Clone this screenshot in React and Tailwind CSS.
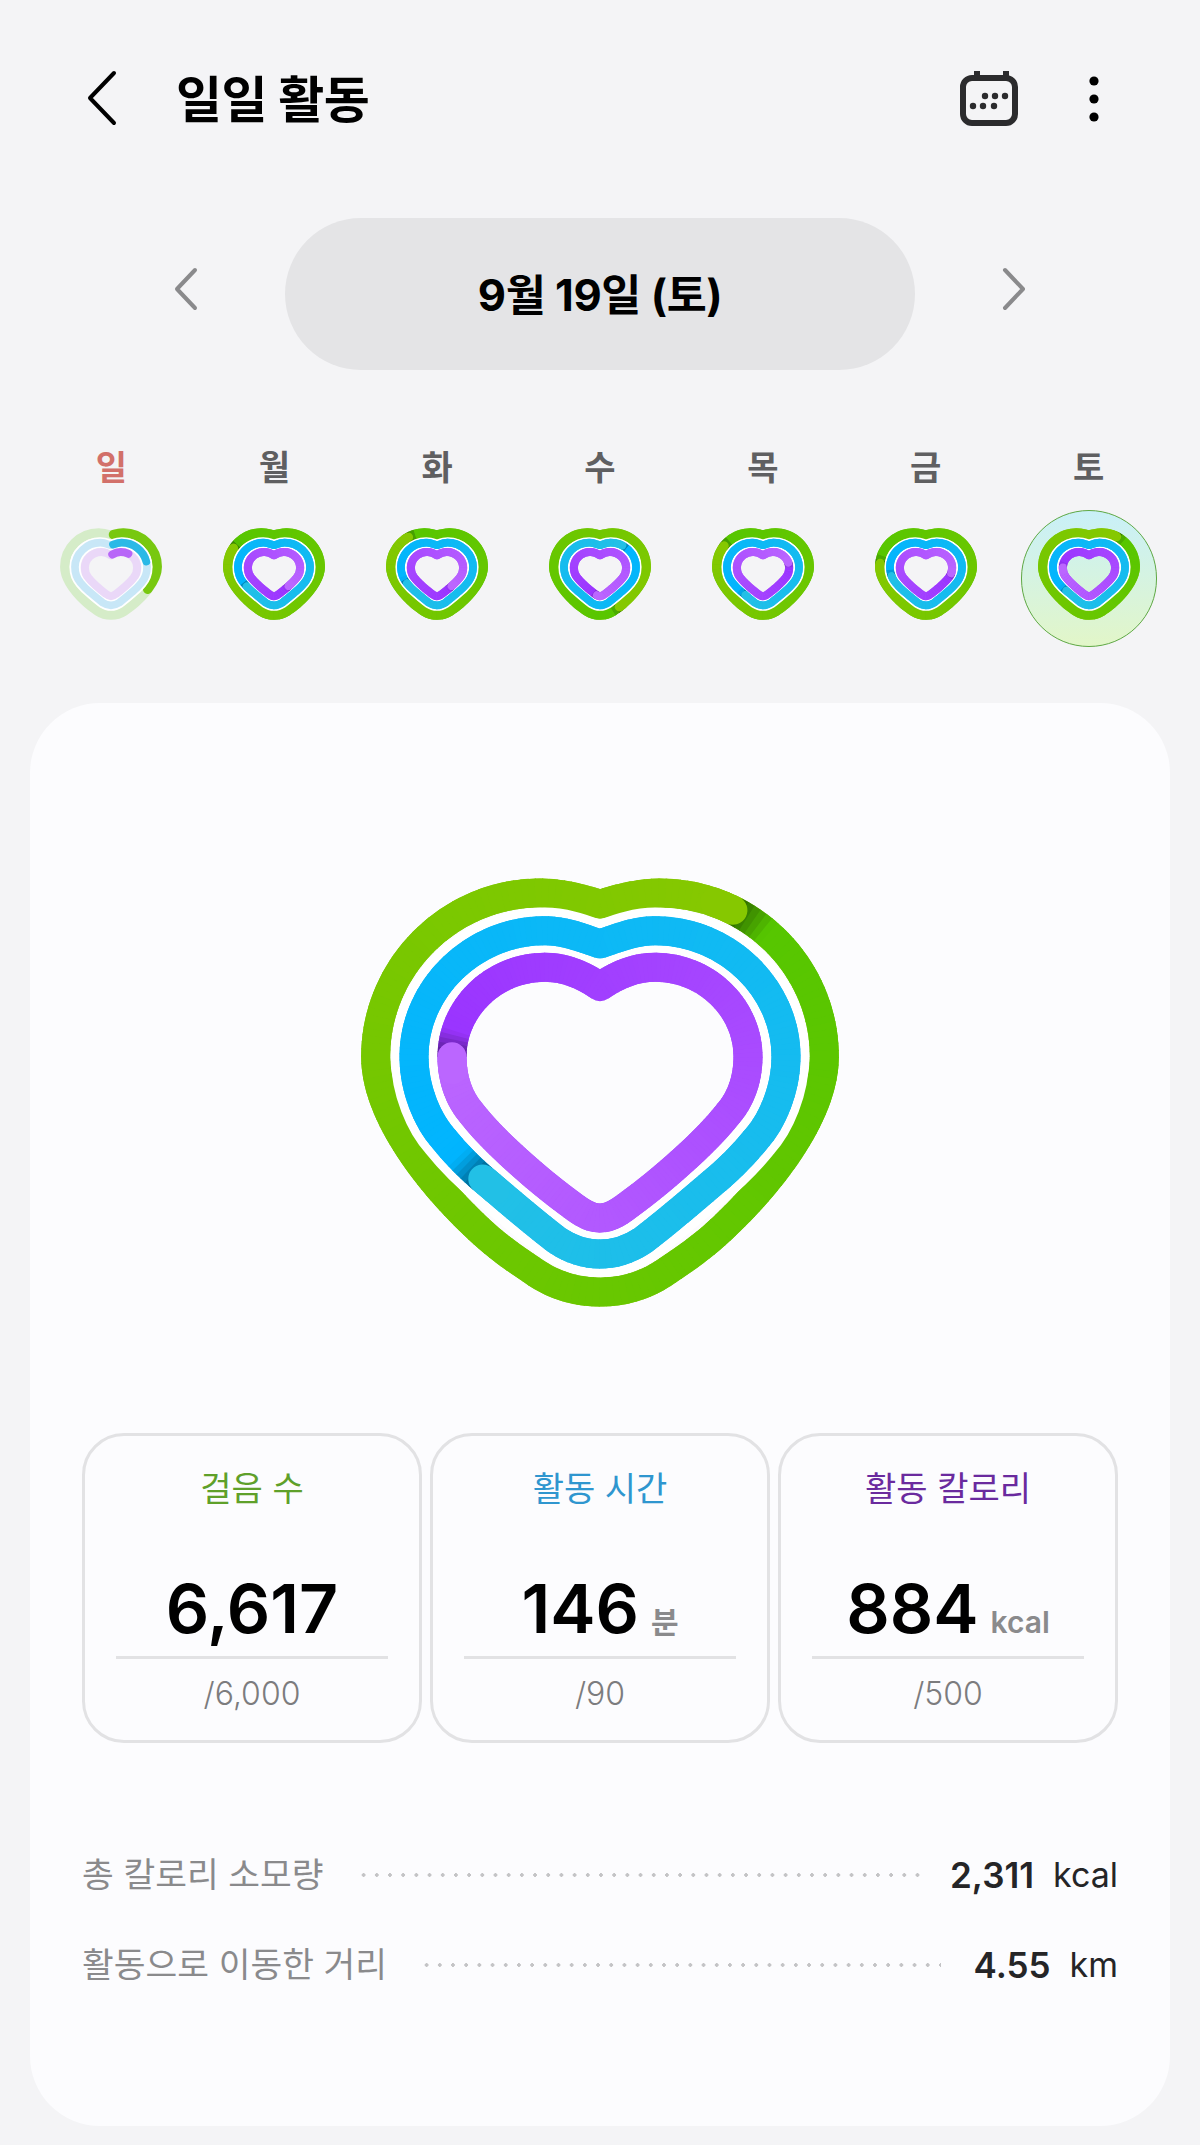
import React from "react";

const HALF = {
  green: [[780,133],[835,115,895,99,960,99],[1230,99,1453,320,1453,590],[1453,760,1300,960,1152,1100],[1090,1160,1030,1200,970,1240],[925,1270,860,1296,780,1296]],
  blue: [[780,252],[830,235,885,212,945,212],[1160,212,1338,385,1338,590],[1338,690,1295,785,1250,835],[1210,885,1165,930,1110,975],[1040,1035,975,1090,910,1140],[865,1170,825,1182,780,1182]],
  purple: [[780,380],[830,345,885,322,945,322],[1100,322,1224,445,1224,590],[1224,660,1200,720,1165,760],[1130,805,1080,855,1030,900],[975,950,920,995,865,1035],[835,1058,810,1074,780,1074]],
};

function heartPath(h) {
  const m = (x) => 1560 - x;
  let d = `M${h[0][0]} ${h[0][1]}`;
  for (let i = 1; i < h.length; i++) {
    const s = h[i];
    d += ` C${s[0]} ${s[1]} ${s[2]} ${s[3]} ${s[4]} ${s[5]}`;
  }
  for (let i = h.length - 1; i >= 1; i--) {
    const s = h[i];
    const prev = i === 1 ? h[0] : h[i - 1].slice(-2);
    d += ` C${m(s[2])} ${s[3]} ${m(s[0])} ${s[1]} ${m(prev[0])} ${prev[1]}`;
  }
  return d + " Z";
}

const PATHS = { green: heartPath(HALF.green), blue: heartPath(HALF.blue), purple: heartPath(HALF.purple) };

const COLORS = {
  green: { from: [0x55, 0xc6, 0x00], to: [0x86, 0xc8, 0x00], track: "#d5ecc8", arc: "#78c810" },
  blue: { from: [0x00, 0xb4, 0xff], to: [0x22, 0xc0, 0xe6], track: "#c8e7f7", arc: "#2bb9e6" },
  purple: { from: [0x99, 0x33, 0xff], to: [0xbb, 0x66, 0xff], track: "#ead8f8", arc: "#b866f8" },
};

const MAIN_GEOM = {
  green: { s: 1, w: 87 },
  blue: { s: 1, w: 87 },
  purple: { s: 1, w: 87 },
  white: 139,
};
const MINI_GEOM = {
  green: { s: 0.955, w: 141 },
  blue: { s: 0.9, w: 119 },
  purple: { s: 0.82, w: 137 },
  white: 172,
};

function mix(a, b, t) {
  return a.map((v, i) => Math.round(v + (b[i] - v) * t));
}
function css(c) {
  return `rgb(${c[0]},${c[1]},${c[2]})`;
}

function Lap({ name, cap, n, w }) {
  const d = PATHS[name];
  const { from, to } = COLORS[name];
  const colorAt = (f) => {
    const t = (((f - cap) % 100) + 100) % 100 / 100;
    let c = mix(from, to, t);
    if (t < 0.03) c = mix(c, [0, 0, 0], 0.5 * (1 - t / 0.03));
    return c;
  };
  const segs = [];
  const step = 100 / n;
  for (let i = 0; i < n; i++) {
    const f = i * step;
    segs.push(
      <path
        key={i}
        d={d}
        pathLength={100}
        fill="none"
        stroke={css(colorAt(f + step / 2))}
        strokeWidth={w}
        strokeDasharray={`${step + 0.08} 200`}
        strokeDashoffset={-f}
      />
    );
  }
  return (
    <>
      <path d={d} fill="none" stroke={css(colorAt(0))} strokeWidth={w} strokeLinejoin="round" />
      {segs}
      <path
        d={d}
        pathLength={100}
        fill="none"
        stroke={css(to)}
        strokeWidth={w}
        strokeLinecap="round"
        strokeDasharray="1.5 200"
        strokeDashoffset={-(cap - 1.5)}
      />
    </>
  );
}

function Partial({ name, end, w }) {
  const d = PATHS[name];
  const c = COLORS[name];
  return (
    <>
      <path d={d} fill="none" stroke={c.track} strokeWidth={w} strokeLinejoin="round" />
      <path
        d={d}
        pathLength={100}
        fill="none"
        stroke={c.arc}
        strokeWidth={w}
        strokeLinecap="round"
        strokeDasharray={`${end - 1} 200`}
        strokeDashoffset={-1}
      />
    </>
  );
}

function Heart({ caps, partial, n, className, geom }) {
  const Ring = (name, white) => (
    <g transform={`translate(780 697) scale(${geom[name].s}) translate(-780 -697)`}>
      {white && <path d={PATHS[name]} fill="none" stroke="#ffffff" strokeWidth={white} strokeLinejoin="round" />}
      {partial ? (
        <Partial name={name} end={partial[name]} w={geom[name].w} />
      ) : (
        <Lap name={name} cap={caps[name]} n={n} w={geom[name].w} />
      )}
    </g>
  );
  return (
    <svg viewBox="0 0 1560 1380" className={className}>
      {Ring("green")}
      {Ring("blue", geom.white)}
      {Ring("purple")}
    </svg>
  );
}

const DAYS = [
  { label: "일", red: true, partial: { green: 33, blue: 21, purple: 12 } },
  { label: "월", caps: { green: 83, blue: 66, purple: 38 } },
  { label: "화", caps: { green: 89, blue: 68, purple: 38 } },
  { label: "수", caps: { green: 42, blue: 11, purple: 52 } },
  { label: "목", caps: { green: 84, blue: 60, purple: 20 } },
  { label: "금", caps: { green: 77, blue: 72, purple: 27 } },
  { label: "토", selected: true, caps: { green: 10.3, blue: 63, purple: 76.5 } },
];

const STATS = [
  { title: "걸음 수", color: "text-[#5fa02a]", value: "6,617", goal: "/6,000" },
  { title: "활동 시간", color: "text-[#2f96cf]", value: "146", unit: "분", goal: "/90" },
  { title: "활동 칼로리", color: "text-[#6a2a9e]", value: "884", unit: "kcal", goal: "/500" },
];

function Row({ label, value, unit, gapClass }) {
  return (
    <div className="flex h-[90px] items-center">
      <span className="text-[34.5px] leading-none text-[#8a8a8c] whitespace-nowrap">{label}</span>
      <div className="ml-[33px] h-[4px] flex-1 bg-[radial-gradient(circle,#c4c4c6_1.8px,transparent_2px)] bg-[length:13.2px_4px]" />
      <span className={`${gapClass} text-[35px] leading-none font-semibold text-[#252527]`}>{value}</span>
      <span className="ml-[19px] text-[34px] leading-none text-[#252527]">{unit}</span>
    </div>
  );
}

export default function App() {
  return (
    <div className="min-h-[2145px] w-full bg-[#f4f4f6] font-[family-name:Inter,'Noto_Sans_CJK_KR',sans-serif] text-black">
      <header className="flex h-[196px] items-center pl-[84px] pr-[101px]">
        <svg width="36" height="58" viewBox="0 0 36 58" fill="none">
          <path d="M30 4 L6 29 L30 54" stroke="#000" strokeWidth="4" strokeLinecap="round" strokeLinejoin="round" />
        </svg>
        <h1 className="ml-[56px] pt-[4px] text-[50px] leading-none font-bold tracking-[-0.01em]">일일 활동</h1>
        <svg className="ml-auto" width="60" height="58" viewBox="0 0 60 58" fill="none">
          <rect x="4" y="9" width="52" height="45" rx="9" stroke="#2b2b2d" strokeWidth="6" />
          <rect x="15" y="2" width="6" height="9" fill="#2b2b2d" />
          <rect x="44" y="2" width="6" height="9" fill="#2b2b2d" />
          {[[26, 27], [36, 27], [46, 27], [14, 37], [24, 37], [35, 37]].map(([cx, cy]) => (
            <circle key={`${cx}-${cy}`} cx={cx} cy={cy} r="3.2" fill="#2b2b2d" />
          ))}
        </svg>
        <svg className="ml-[70px] mt-[2px]" width="10" height="46" viewBox="0 0 10 46" fill="#000">
          <circle cx="5" cy="5" r="4.6" />
          <circle cx="5" cy="23" r="4.6" />
          <circle cx="5" cy="41" r="4.6" />
        </svg>
      </header>

      <div className="mt-[22px] flex h-[152px] items-center justify-center">
        <svg width="26" height="44" viewBox="0 0 26 44" fill="none" className="-mt-[10px]">
          <path d="M22 3 L4 22 L22 41" stroke="#8a8a8c" strokeWidth="4" strokeLinecap="round" strokeLinejoin="round" />
        </svg>
        <div className="mx-[86px] flex h-[152px] w-[630px] items-center justify-center rounded-full bg-[#e4e4e6] pt-[3px] text-[43.5px] leading-none font-bold tracking-[-0.01em]">
          9월 19일 (토)
        </div>
        <svg width="26" height="44" viewBox="0 0 26 44" fill="none" className="-mt-[10px]">
          <path d="M4 3 L22 22 L4 41" stroke="#8a8a8c" strokeWidth="4" strokeLinecap="round" strokeLinejoin="round" />
        </svg>
      </div>

      <div className="mt-[78px] grid grid-cols-7 px-[30px]">
        {DAYS.map((d) => (
          <div key={d.label} className="flex flex-col items-center">
            <span className={`h-[40px] text-[34px] leading-[40px] font-semibold ${d.red ? "text-[#d2706a]" : "text-[#5f5f61]"}`}>
              {d.label}
            </span>
            <div className="relative mt-[36px] h-[99px] w-[112px]">
              {d.selected && (
                <div className="absolute left-1/2 -top-[14px] h-[137px] w-[136px] -translate-x-1/2 rounded-full border-[1.5px] border-[#5ea844] bg-gradient-to-b from-[#c9f0f8] to-[#e2f6c8]" />
              )}
              <Heart caps={d.caps} partial={d.partial} n={60} geom={MINI_GEOM} className="absolute inset-0 h-full w-full" />
            </div>
          </div>
        ))}
      </div>

      <main className="mx-[30px] mt-[80px] h-[1423px] rounded-[70px] bg-[#fcfcfe] px-[52px] pt-[157px]">
        <div className="flex justify-center">
          <Heart caps={{ green: 10.3, blue: 63, purple: 76.5 }} n={200} geom={MAIN_GEOM} className="h-[460px] w-[520px]" />
        </div>

        <div className="mt-[113px] grid grid-cols-3 gap-2">
          {STATS.map((s) => (
            <div key={s.title} className="flex h-[310px] flex-col items-center rounded-[42px] border-[3px] border-[#e2e2e4] pt-[31px]">
              <span className={`h-[44px] text-[34px] leading-[44px] ${s.color}`}>{s.title}</span>
              <div className="mt-[58px] flex h-[78px] items-baseline justify-center">
                <span className="text-[68px] leading-[78px] font-semibold">{s.value}</span>
                {s.unit && (
                  <span className="ml-[12px] text-[30px] leading-[36px] font-semibold text-[#8a8a8c]">{s.unit}</span>
                )}
              </div>
              <div className="mt-[9px] h-[3px] w-[272px] bg-[#e2e2e4]" />
              <span className="mt-[15px] text-[32px] leading-[40px] font-light text-[#7c7c7e]">{s.goal}</span>
            </div>
          ))}
        </div>

        <div className="mt-[87px]">
          <Row label="총 칼로리 소모량" value="2,311" unit="kcal" gapClass="ml-[27px]" />
          <Row label="활동으로 이동한 거리" value="4.55" unit="km" gapClass="ml-[33px]" />
        </div>
      </main>
    </div>
  );
}
